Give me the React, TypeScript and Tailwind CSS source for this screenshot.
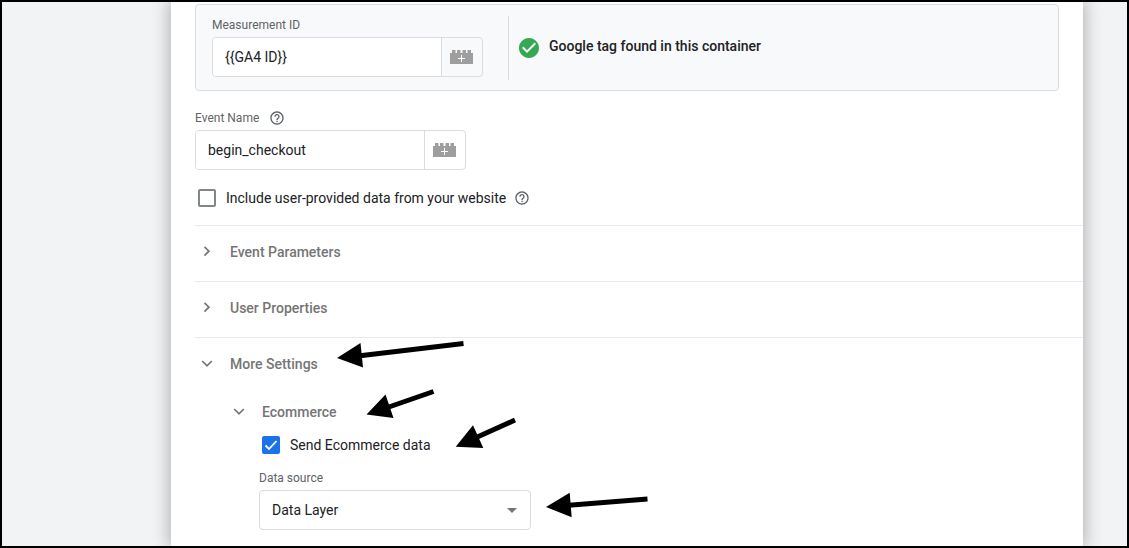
import { useState } from 'react';
import type { ReactNode } from 'react';
import { MdCheckCircle, MdHelpOutline } from 'react-icons/md';

interface VariableInputProps {
  id: string;
  value: string;
  onChange: (v: string) => void;
}

function BrickIcon() {
  return (
    <svg width="23" height="14" viewBox="0 0 23 14" aria-hidden="true">
      <path d="M0 3h2V0h3.500v3h1.500V0h3.500v3h2V0h3.500v3h1.500V0h3.500v3h2v11H0z" fill="#9e9e9e" />
      <path d="M11.5 5v7M8 8.5h7" stroke="#fff" strokeWidth="1" />
    </svg>
  );
}

function VariableInput({ id, value, onChange }: VariableInputProps) {
  return (
    <div className="flex h-10 w-[271px] overflow-hidden rounded border border-[#dadce0]">
      <input
        id={id}
        value={value}
        onChange={(e) => onChange(e.target.value)}
        className="min-w-0 flex-1 bg-white px-3 text-sm text-[#202124] outline-none"
      />
      <button aria-label="Insert variable" className="grid w-[41px] place-items-center border-l border-[#dadce0] pr-0.5">
        <BrickIcon />
      </button>
    </div>
  );
}

interface CheckboxProps {
  label: string;
  checked: boolean;
  onChange: (v: boolean) => void;
}

function Checkbox({ label, checked, onChange }: CheckboxProps) {
  return (
    <label className="flex items-center gap-[10px] text-sm text-[#202124]">
      <span className="relative flex">
        <input
          type="checkbox"
          checked={checked}
          onChange={(e) => onChange(e.target.checked)}
          className="size-[18px] appearance-none rounded-xs border-2 border-[#80868b] bg-white checked:border-[#1a73e8] checked:bg-[#1a73e8]"
        />
        {checked && (
          <svg viewBox="0 0 18 18" className="pointer-events-none absolute inset-0" aria-hidden="true">
            <path d="M3.5 9.5l3.5 3.5 7.5-8" fill="none" stroke="#fff" strokeWidth="1.8" />
          </svg>
        )}
      </span>
      {label}
    </label>
  );
}

function Chevron({ open }: { open: boolean }) {
  return (
    <svg width="24" height="24" viewBox="0 0 24 24" fill="none" stroke="#757575" strokeWidth="1.7" aria-hidden="true">
      {open ? <path d="M7.2 9l4.800 4.800 4.800-4.800" /> : <path d="M9.500 6.800l4.400 4.400-4.400 4.400" />}
    </svg>
  );
}

interface SectionProps {
  title: string;
  open: boolean;
  onToggle: () => void;
  children?: ReactNode;
}

function Section({ title, open, onToggle, children }: SectionProps) {
  return (
    <section className="border-t border-[#e8eaed]">
      <button onClick={onToggle} aria-expanded={open} className={headerCls + ' mb-1 h-[51px]'}>
        <Chevron open={open} />
        {title}
      </button>
      {open && children}
    </section>
  );
}

function Arrows() {
  return (
    <svg
      viewBox="2 2 660 530"
      className="pointer-events-none absolute left-0 top-0 h-[530px] w-[660px]"
      stroke="#000"
      strokeWidth="5"
      aria-hidden="true"
    >
      <path d="M360 355.8L463.5 343.5M386 408L433.5 391.5M474 438.5L515 420M569 505.3L647.5 499" />
      <path
        d="M337 358l23.5-15 2.5 24.500zM366.500 414.500l19-20 8 23.500zM455.700 446.700l17.300-21.400 10.300 22.700zM546 507l23.700-14.300 2 24.600z"
        stroke="none"
      />
    </svg>
  );
}

export default function App() {
  const [measurementId, setMeasurementId] = useState('{{GA4 ID}}');
  const [eventName, setEventName] = useState('begin_checkout');
  const [userData, setUserData] = useState(false);
  const [sendData, setSendData] = useState(true);
  const [source, setSource] = useState('Data Layer');
  const [paramsOpen, setParamsOpen] = useState(false);
  const [propsOpen, setPropsOpen] = useState(false);
  const [moreOpen, setMoreOpen] = useState(true);
  const [ecomOpen, setEcomOpen] = useState(true);

  return (
    <div className="relative flex min-h-screen overflow-hidden border-2 border-black bg-[#f1f3f4] pl-[169px] pr-11 font-[Roboto,sans-serif]">
      <main className="min-w-0 flex-1 bg-white pl-6 pt-0.5 shadow-[0_0_16px_2px_rgba(0,0,0,0.27)]">
        <div className="mr-6 flex rounded border border-[#dadce0] bg-[#f8f9fa] px-4 pb-[13px] pt-3">
          <div className="flex flex-col gap-1">
            <label htmlFor="measurement-id" className={labelCls}>
              Measurement ID
            </label>
            <VariableInput id="measurement-id" value={measurementId} onChange={setMeasurementId} />
          </div>
          <div className="-mb-[3px] -mt-px ml-[25px] flex items-start gap-2 border-l border-[#dadce0] pl-2 pt-5">
            <MdCheckCircle size={24} color="#34a853" />
            <span className="text-sm font-medium text-[#202124]">Google tag found in this container</span>
          </div>
        </div>

        <div className="mt-[19px] flex flex-col gap-1">
          <div className="flex items-center gap-[10px]">
            <label htmlFor="event-name" className={labelCls}>
              Event Name
            </label>
            <MdHelpOutline size={16} color="#5f6368" />
          </div>
          <VariableInput id="event-name" value={eventName} onChange={setEventName} />
        </div>

        <div className="flex h-[55px] items-center gap-2 pl-[3px]">
          <Checkbox label="Include user-provided data from your website" checked={userData} onChange={setUserData} />
          <MdHelpOutline size={16} color="#5f6368" />
        </div>

        <Section title="Event Parameters" open={paramsOpen} onToggle={() => setParamsOpen(!paramsOpen)} />
        <Section title="User Properties" open={propsOpen} onToggle={() => setPropsOpen(!propsOpen)} />
        <Section title="More Settings" open={moreOpen} onToggle={() => setMoreOpen(!moreOpen)}>
          <div className="pl-8">
            <button onClick={() => setEcomOpen(!ecomOpen)} aria-expanded={ecomOpen} className={headerCls + ' h-[38px]'}>
              <Chevron open={ecomOpen} />
              Ecommerce
            </button>
            {ecomOpen && (
              <div className="pl-8">
                <div className="flex pl-[3px] pt-1">
                  <Checkbox label="Send Ecommerce data" checked={sendData} onChange={setSendData} />
                </div>
                <div className="mt-[15px] flex flex-col gap-1 pb-4">
                  <label htmlFor="data-source" className={labelCls}>
                    Data source
                  </label>
                  <div className="relative w-[272px]">
                    <select
                      id="data-source"
                      value={source}
                      onChange={(e) => setSource(e.target.value)}
                      className="h-10 w-full appearance-none rounded border border-[#dadce0] bg-white px-3 text-sm text-[#202124] outline-none"
                    >
                      <option>Data Layer</option>
                      <option>Custom Object</option>
                    </select>
                    <svg
                      width="10"
                      height="5"
                      viewBox="0 0 10 5"
                      className="pointer-events-none absolute right-[14px] top-[18px]"
                      aria-hidden="true"
                    >
                      <path d="M0 0h10L5 5z" fill="#757575" />
                    </svg>
                  </div>
                </div>
              </div>
            )}
          </div>
        </Section>
      </main>
      <Arrows />
    </div>
  );
}

const labelCls = 'text-xs text-[#5f6368]';
const headerCls = 'flex w-full items-center gap-[11px] text-sm font-medium text-[#757575]';
